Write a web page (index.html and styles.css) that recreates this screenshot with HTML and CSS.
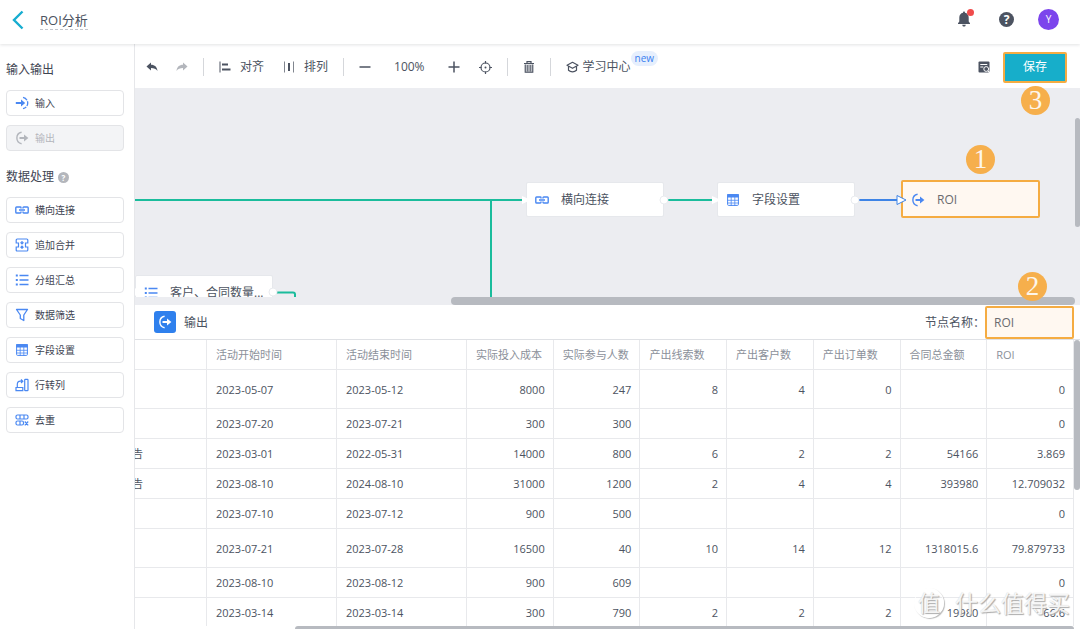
FILE: index.html
```html
<!DOCTYPE html>
<html lang="zh-CN">
<head>
<meta charset="utf-8">
<meta name="viewport" content="width=device-width, initial-scale=1">
<title>ROI分析</title>
<link rel="stylesheet" href="styles.css">
</head>
<body>
<svg class="sprite" aria-hidden="true">
  <symbol id="i-in" viewBox="0 0 14 14"><path d="M8 1.3a5.8 5.8 0 0 1 0 11.4" fill="none" stroke="currentColor" stroke-width="1.3" stroke-dasharray="5 1"/><path d="M0.8 7h6" stroke="currentColor" stroke-width="2"/><path d="M6 3.6L10.2 7 6 10.4z" fill="currentColor"/></symbol>
  <symbol id="i-out" viewBox="0 0 14 14"><path d="M6.6 1.3a5.8 5.8 0 0 0 0 11.4" fill="none" stroke="currentColor" stroke-width="1.4"/><path d="M4.5 7h5.5" stroke="currentColor" stroke-width="2"/><path d="M9 3.6L13.4 7 9 10.4z" fill="currentColor"/></symbol>
  <symbol id="i-link" viewBox="0 0 14 14"><g fill="none" stroke="currentColor" stroke-width="1.4"><path d="M6 5.5V4.7a.7.7 0 0 0-.7-.7H1.6a.8.8 0 0 0-.8.8v4.4c0 .5.3.8.8.8h3.7c.4 0 .7-.3.7-.7v-.8"/><path d="M8 5.5V4.7c0-.4.3-.7.7-.7h3.7c.5 0 .8.3.8.8v4.4c0 .5-.3.8-.8.8H8.7a.7.7 0 0 1-.7-.7v-.8M4 7h6"/></g></symbol>
  <symbol id="i-merge" viewBox="0 0 14 14"><g fill="none" stroke="currentColor" stroke-width="1.2"><path d="M1.2 5V2c0-.6.3-1 1-1h9.600c.6 0 1 .4 1 1v3H10.500v4h2.300v3c0 .6-.4 1-1 1H2.200c-.7 0-1-.4-1-1V9h2.300V5zM7 3v2.500M5.500 4.300L7 5.800l1.500-1.500M7 11V8.500M5.500 9.700L7 8.200l1.500 1.500"/></g></symbol>
  <symbol id="i-list" viewBox="0 0 14 14"><path d="M4.500 2.500H13.500M4.500 7H13.500M4.500 11.500H13.500" stroke="currentColor" stroke-width="1.300"/><path d="M.8 2.500h2M.8 7h2M.8 11.500h2" stroke="currentColor" stroke-width="1.800"/></symbol>
  <symbol id="i-filter" viewBox="0 0 14 14"><path d="M1.500 1.500h11L8.800 7v5.500L5.300 10.500V7z" fill="none" stroke="currentColor" stroke-width="1.300" stroke-linejoin="round"/></symbol>
  <symbol id="i-grid" viewBox="0 0 14 14"><rect x="1.600" y="1.600" width="10.800" height="10.800" rx="1" fill="none" stroke="currentColor"/><path d="M1.100 1.100h11.800v3.400H1.100z" fill="currentColor"/><path d="M5.200 4v9M8.800 4v9M1 7.300h12M1 10h12" stroke="currentColor" stroke-width=".8"/></symbol>
  <symbol id="i-pivot" viewBox="0 0 14 14"><g fill="none" stroke="currentColor" stroke-width="1.200"><rect x="9.700" y="1.300" width="3.300" height="11.400" rx=".6"/><path d="M1 12.700V9.500h6.800v3.200zM2.300 9V6.500c0-2 1-3.300 3-3.300h2.200M6 1.500l1.800 1.700L6 5"/></g></symbol>
  <symbol id="i-dedupe" viewBox="0 0 14 14"><g fill="none" stroke="currentColor" stroke-width="1.200"><rect x="1" y="2" width="12" height="4" rx="1.500"/><rect x="1" y="8" width="7.500" height="4" rx="1.500"/><path d="M5 2v4M9 2v4M5 8v4M9.800 8.500l3.400 3.800M13.200 8.500L9.800 12.300"/></g></symbol>
</svg>

<header class="topbar">
  <button class="icon-btn back" aria-label="返回"><svg width="12" height="20" viewBox="0 0 12 20"><path d="M10.500 1.500L2 10l8.500 8.500" fill="none" stroke="currentColor" stroke-width="2.400"/></svg></button>
  <h1 class="doc-title">ROI分析</h1>
  <div class="account">
    <button class="icon-btn bell" aria-label="通知"><svg width="14" height="16" viewBox="0 0 14 16"><path d="M7 .500c.7 0 1 .500 1 1.200 2.300.5 3.700 2.300 3.700 4.800v4L13 12.300v.700H1v-.7l1.300-1.800v-4C2.300 4 3.700 2.200 6 1.700 6 1 6.300.500 7 .500zM5.200 13.700h3.600C8.600 15 8 15.500 7 15.500s-1.600-.5-1.800-1.800z" fill="currentColor"/></svg><span class="dot"></span></button>
    <button class="help" aria-label="帮助">?</button>
    <button class="avatar">Y</button>
  </div>
</header>

<div class="workspace">
  <aside class="sidebar">
    <h2 class="group-title">输入输出</h2>
    <div class="tools">
      <button class="tool"><svg class="ico"><use href="#i-in"/></svg>输入</button>
      <button class="tool" disabled><svg class="ico"><use href="#i-out"/></svg>输出</button>
    </div>
    <h2 class="group-title">数据处理<span class="hint">?</span></h2>
    <div class="tools">
      <button class="tool"><svg class="ico"><use href="#i-link"/></svg>横向连接</button>
      <button class="tool"><svg class="ico"><use href="#i-merge"/></svg>追加合并</button>
      <button class="tool"><svg class="ico"><use href="#i-list"/></svg>分组汇总</button>
      <button class="tool"><svg class="ico"><use href="#i-filter"/></svg>数据筛选</button>
      <button class="tool"><svg class="ico"><use href="#i-grid"/></svg>字段设置</button>
      <button class="tool"><svg class="ico"><use href="#i-pivot"/></svg>行转列</button>
      <button class="tool"><svg class="ico"><use href="#i-dedupe"/></svg>去重</button>
    </div>
  </aside>

  <main class="main">
    <div class="toolbar">
      <div class="bar-group history">
        <button class="icon-btn" aria-label="撤销"><svg width="12" height="12" viewBox="0 0 12 12"><path d="M5 1.500v2.300c3.800 0 6 2.200 6.500 6.200C10 7.800 8 7 5 7v2.400L.5 5.400z" fill="currentColor"/></svg></button>
        <button class="icon-btn faded" aria-label="重做"><svg width="12" height="12" viewBox="0 0 12 12"><path d="M7 1.500v2.300C3.200 3.800 1 6 .5 10 2 7.800 4 7 7 7v2.400l4.500-4z" fill="currentColor"/></svg></button>
      </div>
      <span class="sep"></span>
      <div class="bar-group">
        <button class="text-btn"><svg width="12" height="12" viewBox="0 0 12 12"><path d="M1 .5v11" stroke="currentColor"/><path d="M3 3.500h6M3 8.500h8.500" stroke="currentColor" stroke-width="2"/></svg>对齐</button>
        <button class="text-btn"><svg width="12" height="12" viewBox="0 0 12 12"><path d="M1.500.5v11M10.500.5v11" stroke="currentColor" opacity=".7"/><path d="M6 2v8" stroke="currentColor" stroke-width="2"/></svg>排列</button>
      </div>
      <span class="sep"></span>
      <div class="bar-group zoom">
        <button class="icon-btn" aria-label="缩小"><svg width="12" height="12" viewBox="0 0 12 12"><path d="M.5 6h11" stroke="currentColor" stroke-width="1.500"/></svg></button>
        <span>100%</span>
        <button class="icon-btn" aria-label="放大"><svg width="12" height="12" viewBox="0 0 12 12"><path d="M.5 6h11M6 .5v11" stroke="currentColor" stroke-width="1.500"/></svg></button>
      </div>
      <button class="icon-btn locate" aria-label="定位"><svg width="13" height="13" viewBox="0 0 13 13"><circle cx="6.500" cy="6.500" r="4.500" fill="none" stroke="currentColor" stroke-width="1.200"/><circle cx="6.500" cy="6.500" r="1" fill="currentColor"/><path d="M6.500 0v2.500M6.500 10.500V13M0 6.500h2.500M10.500 6.500H13" stroke="currentColor" stroke-width="1.200"/></svg></button>
      <span class="sep"></span>
      <button class="icon-btn" aria-label="删除"><svg width="12" height="12" viewBox="0 0 12 12"><path d="M1 2.500h10M4 2V.7h4V2" fill="none" stroke="currentColor" stroke-width="1.200"/><path d="M2.200 3.500v7.800h7.600V3.500" fill="#b9bcc2" stroke="currentColor" stroke-width="1.100"/><path d="M4.700 4v6.500M7.300 4v6.500" stroke="currentColor" stroke-width=".8"/></svg></button>
      <span class="sep"></span>
      <a class="learn" href="#"><svg width="13" height="12" viewBox="0 0 13 12"><g fill="none" stroke="currentColor" stroke-width="1.200" stroke-linejoin="round"><path d="M1 4.300L6.500 1.300 12 4.300 6.500 7.300zM2.500 5.500v3.800c2.200 2 5.800 2 8 0V5.500"/></g></svg>学习中心</a>
      <span class="new">new</span>
      <div class="actions">
        <button class="icon-btn" aria-label="查看记录"><svg width="12" height="12" viewBox="0 0 12 12"><rect x=".5" y=".5" width="11" height="11" rx="1" fill="currentColor"/><path d="M2.300 3.500h7M2.300 6h3" stroke="#fff" stroke-width="1.200"/><circle cx="8.200" cy="8" r="2.400" fill="#4c5361" stroke="#fff"/><path d="M10 9.800l1.800 2" stroke="#fff" stroke-width="1.200"/></svg></button>
        <button class="save">保存</button>
      </div>
      <span class="step step-save">3</span>
    </div>

    <section class="canvas">
      <div class="stage">
        <svg class="wires" width="940" height="209" viewBox="0 0 940 209" fill="none">
          <g stroke="#1abc9c" stroke-width="2"><path d="M0 112h387M356 112v97M533 112h44M142 204.500h16q2 0 2 2v3"/></g>
          <path d="M724 112h38" stroke="#3d83e6" stroke-width="2"/>
        </svg>
        <div class="node n-join"><svg class="ico"><use href="#i-link"/></svg>横向连接</div>
        <div class="node n-field"><svg class="ico"><use href="#i-grid"/></svg>字段设置</div>
        <div class="node n-roi"><svg class="ico"><use href="#i-out"/></svg>ROI</div>
        <div class="node n-group"><svg class="ico"><use href="#i-list"/></svg>客户、合同数量...</div>
        <svg class="wires" width="940" height="209" viewBox="0 0 940 209">
          <g fill="#fff"><path d="M387 108l9 4-9 4zM577 108l9 4-9 4zM0 200l5 4-5 4z"/></g>
          <g fill="#fff" stroke="#e9ebef"><circle cx="529" cy="112" r="4"/><circle cx="720" cy="112" r="4"/><circle cx="138" cy="204" r="4"/></g>
          <path d="M762 107.500l9 4.500-9 4.500z" fill="#fff" stroke="#3d83e6"/>
        </svg>
        <span class="step step-node">1</span>
      </div>
      <div class="v-track"><div class="thumb"></div></div>
      <div class="h-track"><div class="thumb"></div></div>
    </section>

    <section class="panel">
      <div class="panel-head">
        <span class="panel-icon"><svg class="ico"><use href="#i-out"/></svg></span>
        <h2 class="panel-title">输出</h2>
        <label class="name-label" for="node-name">节点名称：</label>
        <input class="name-input" id="node-name" type="text" value="ROI">
        <span class="step step-name">2</span>
      </div>
      <div class="data">
        <div class="table-wrap">
          <table class="grid">
            <colgroup><col class="c-first"><col class="c-date"><col class="c-date"><col><col><col><col><col><col><col></colgroup>
            <thead><tr><th></th><th>活动开始时间</th><th>活动结束时间</th><th>实际投入成本</th><th>实际参与人数</th><th>产出线索数</th><th>产出客户数</th><th>产出订单数</th><th>合同总金额</th><th>ROI</th></tr></thead>
            <tbody>
              <tr class="tall"><td></td><td>2023-05-07</td><td>2023-05-12</td><td>8000</td><td>247</td><td>8</td><td>4</td><td>0</td><td></td><td>0</td></tr>
              <tr><td></td><td>2023-07-20</td><td>2023-07-21</td><td>300</td><td>300</td><td></td><td></td><td></td><td></td><td>0</td></tr>
              <tr><td>告</td><td>2023-03-01</td><td>2022-05-31</td><td>14000</td><td>800</td><td>6</td><td>2</td><td>2</td><td>54166</td><td>3.869</td></tr>
              <tr><td>告</td><td>2023-08-10</td><td>2024-08-10</td><td>31000</td><td>1200</td><td>2</td><td>4</td><td>4</td><td>393980</td><td>12.709032</td></tr>
              <tr><td></td><td>2023-07-10</td><td>2023-07-12</td><td>900</td><td>500</td><td></td><td></td><td></td><td></td><td>0</td></tr>
              <tr class="tall"><td></td><td>2023-07-21</td><td>2023-07-28</td><td>16500</td><td>40</td><td>10</td><td>14</td><td>12</td><td>1318015.6</td><td>79.879733</td></tr>
              <tr><td></td><td>2023-08-10</td><td>2023-08-12</td><td>900</td><td>609</td><td></td><td></td><td></td><td></td><td>0</td></tr>
              <tr><td></td><td>2023-03-14</td><td>2023-03-14</td><td>300</td><td>790</td><td>2</td><td>2</td><td>2</td><td>19980</td><td>66.6</td></tr>
            </tbody>
          </table>
        </div>
        <div class="v-track"><div class="thumb"></div></div>
        <div class="h-track"><div class="thumb"></div></div>
      </div>
    </section>
  </main>
</div>
<div class="watermark"><span class="seal">值</span><span>什么值得买</span></div>
</body>
</html>
```

FILE: styles.css
```css
* { box-sizing: border-box; }

body {
  margin: 0;
  height: 100vh;
  display: flex;
  flex-direction: column;
  overflow: hidden;
  background: #fff;
  color: #4c5361;
  font: 12px/18px "Open Sans", "Noto Sans", "Noto Sans CJK SC", sans-serif;
}

h1, h2 { margin: 0; font-size: 12px; font-weight: 400; }

button {
  padding: 0;
  border: 0;
  background: none;
  color: inherit;
  font: inherit;
  cursor: pointer;
}

.sprite { position: absolute; width: 0; height: 0; }
.icon-btn { display: flex; flex: none; }
.ico { width: 14px; height: 14px; flex: none; color: #4a88f2; }

/* Top bar */
.topbar {
  position: relative;
  z-index: 2;
  display: flex;
  flex: none;
  align-items: center;
  padding: 8px 21px 8px 12px;
  height: 44px;
  box-shadow: 0 1px 3px rgba(30, 35, 50, .13);
}
.back { color: #17add0; margin: 0 16px 4px 0; }
.doc-title { border-bottom: 1px dashed #c3c6cc; font-size: 13px; line-height: 18px; margin-bottom: 6px; padding-top: 2px; }
.account { display: flex; align-items: center; gap: 28px; margin: 0 0 6px auto; }
.bell { position: relative; }
.dot { position: absolute; top: -2px; right: -3px; width: 7px; height: 7px; border-radius: 50%; background: #f04b4b; }
.help, .avatar { border-radius: 50%; color: #fff; }
.help { width: 15px; height: 15px; background: #4c5361; font-size: 12px; font-weight: 700; line-height: 15px; }
.avatar { width: 21px; height: 21px; margin-left: -4px; background: #7c45ec; font-size: 10px; line-height: 21px; }

.workspace { display: flex; flex: 1; min-height: 0; }

/* Sidebar */
.sidebar { flex: none; width: 135px; padding: 16px 10px 0 6px; border-right: 1px solid #e6e7ea; }
.group-title { display: flex; align-items: center; gap: 4px; line-height: 20px; color: #3e4452; }
.hint { width: 11px; height: 11px; border-radius: 50%; background: #b3b6bc; color: #fff; font-size: 8px; font-weight: 700; line-height: 11px; text-align: center; }
.tools { display: flex; flex-direction: column; gap: 9px; padding: 10px 0 16px; }
.tool {
  display: flex;
  align-items: center;
  gap: 6px;
  height: 26px;
  padding: 0 8px;
  border: 1px solid #e3e4e7;
  border-radius: 4px;
  background: #fff;
  font-size: 10px;
  color: #3e4452;
}
.tool:disabled { background: #f3f4f6; color: #b3b6bc; }
.tool:disabled .ico { color: #b3b6bc; }

/* Toolbar */
.main { display: flex; flex: 1; flex-direction: column; min-width: 0; }
.toolbar { position: relative; z-index: 1; display: flex; flex: none; align-items: center; height: 44px; padding: 2px 13px 0 11px; background: #fff; }
.bar-group { display: flex; align-items: center; gap: 19px; }
.history { gap: 18px; }
.zoom { gap: 23px; }
.faded { color: #b3b6bc; }
.text-btn { display: flex; align-items: center; gap: 9px; }
.sep { width: 1px; height: 18px; margin: 0 15px; background: #d5d7db; }
.locate { margin-left: 19px; }
.learn { display: flex; align-items: center; gap: 4px; color: inherit; text-decoration: none; }
.new { align-self: flex-start; margin-top: 5px; padding: 0 4px; border-radius: 8px; background: #e6effd; color: #3b7ff0; font-size: 10px; line-height: 15px; }
.actions { display: flex; align-items: center; gap: 13px; margin-left: auto; }
.save { width: 64px; height: 31px; border: 2px solid #f5ac42; border-radius: 2px; background: #17aeca; color: #fff; }

.step {
  position: absolute;
  z-index: 3;
  width: 29px;
  height: 29px;
  border-radius: 50%;
  background: #f6af4c;
  color: #fdf6ec;
  font: 27px/29px "Liberation Serif", serif;
  text-align: center;
}
.step-save { top: 42px; right: 30px; }
.step-node { top: 57px; left: 831px; }
.step-name { top: -33px; right: 33px; }

/* Flow canvas */
.canvas { display: grid; flex: none; grid-template: 209px 8px / 1fr 5px; background: #ecedf1; }
.stage { position: relative; overflow: hidden; }
.wires { position: absolute; top: 0; left: 0; }
.node {
  position: absolute;
  display: flex;
  align-items: center;
  gap: 12px;
  width: 138px;
  height: 35px;
  padding: 1px 8px 0;
  border: 1px solid #e6e8ec;
  border-radius: 2px;
  background: #fff;
  white-space: nowrap;
}
.n-join { top: 94px; left: 391px; }
.n-field { top: 94px; left: 582px; }
.n-group { top: 187px; left: 0; }
.n-roi { top: 92px; left: 766px; width: 139px; height: 38px; border: 2px solid #f5ac42; background: #fff8f1; color: #6b6b6e; }
.thumb { background: #b7bac0; }
.canvas .v-track { padding-top: 30px; }
.canvas .v-track .thumb { height: 109px; border-radius: 3px; }
.canvas .h-track { grid-column: 1 / -1; padding-right: 5px; }
.canvas .h-track .thumb { width: 66.4%; height: 8px; margin-left: auto; border-radius: 4px; }

/* Output panel */
.panel { display: flex; flex: 1; flex-direction: column; min-height: 0; }
.panel-head { position: relative; display: flex; flex: none; align-items: center; height: 35px; padding: 0 6px 0 19px; border-bottom: 1px solid #dfe1e5; }
.panel-icon { display: grid; place-items: center; width: 22px; height: 22px; border-radius: 3px; background: #2f80ed; }
.panel-icon .ico { color: #fff; }
.panel-title { margin-left: 8px; line-height: 20px; padding-top: 2px; }
.name-label { margin-left: auto; line-height: 20px; padding-top: 2px; }
.name-input {
  width: 89px;
  height: 33px;
  padding: 0 7px;
  border: 2px solid #f5ac42;
  border-radius: 2px;
  background: #fff8f1;
  color: #6b6b6e;
  font: inherit;
}

.data { display: grid; flex: 1; grid-template: minmax(0, 1fr) 3px / minmax(0, 1fr) 6px; min-height: 0; }
.table-wrap { overflow: hidden; }
.grid { width: 100%; table-layout: fixed; border-collapse: separate; border-spacing: 0; font-size: 11px; }
.c-first { width: 72px; }
.c-date { width: 130px; }
.grid th, .grid td {
  height: 30px;
  padding: 1px 8px 0;
  border: solid #e8e9ec;
  border-width: 0 1px 1px 0;
  overflow: hidden;
  font-weight: 400;
  text-align: right;
  white-space: nowrap;
}
.grid .tall td { height: 39px; }
.grid th { color: #8b909a; text-align: left; }
.grid td:nth-child(-n+3) { text-align: left; }
.grid td:first-child { padding-left: 0; text-indent: -3px; }
.grid th + th, .grid td:nth-child(2), .grid td:nth-child(3) { padding-left: 9px; }
.data .v-track .thumb { height: 150px; border-radius: 3px; }
.data .h-track .thumb { width: 83%; height: 3px; margin-left: auto; border-radius: 3px 3px 0 0; }

.watermark {
  position: absolute;
  right: 10px;
  bottom: 10px;
  z-index: 4;
  display: flex;
  align-items: center;
  gap: 11px;
  color: rgba(255, 255, 255, .85);
  font-size: 23px;
  line-height: 32px;
  text-shadow: 1px 1px 1px #aaa, 0 0 1px #ccc;
  pointer-events: none;
}
.seal { width: 30px; height: 30px; border: 1px solid #fff; border-radius: 50%; box-shadow: 1px 1px 1px #bbb; font-size: 22px; line-height: 27px; text-align: center; }
```
